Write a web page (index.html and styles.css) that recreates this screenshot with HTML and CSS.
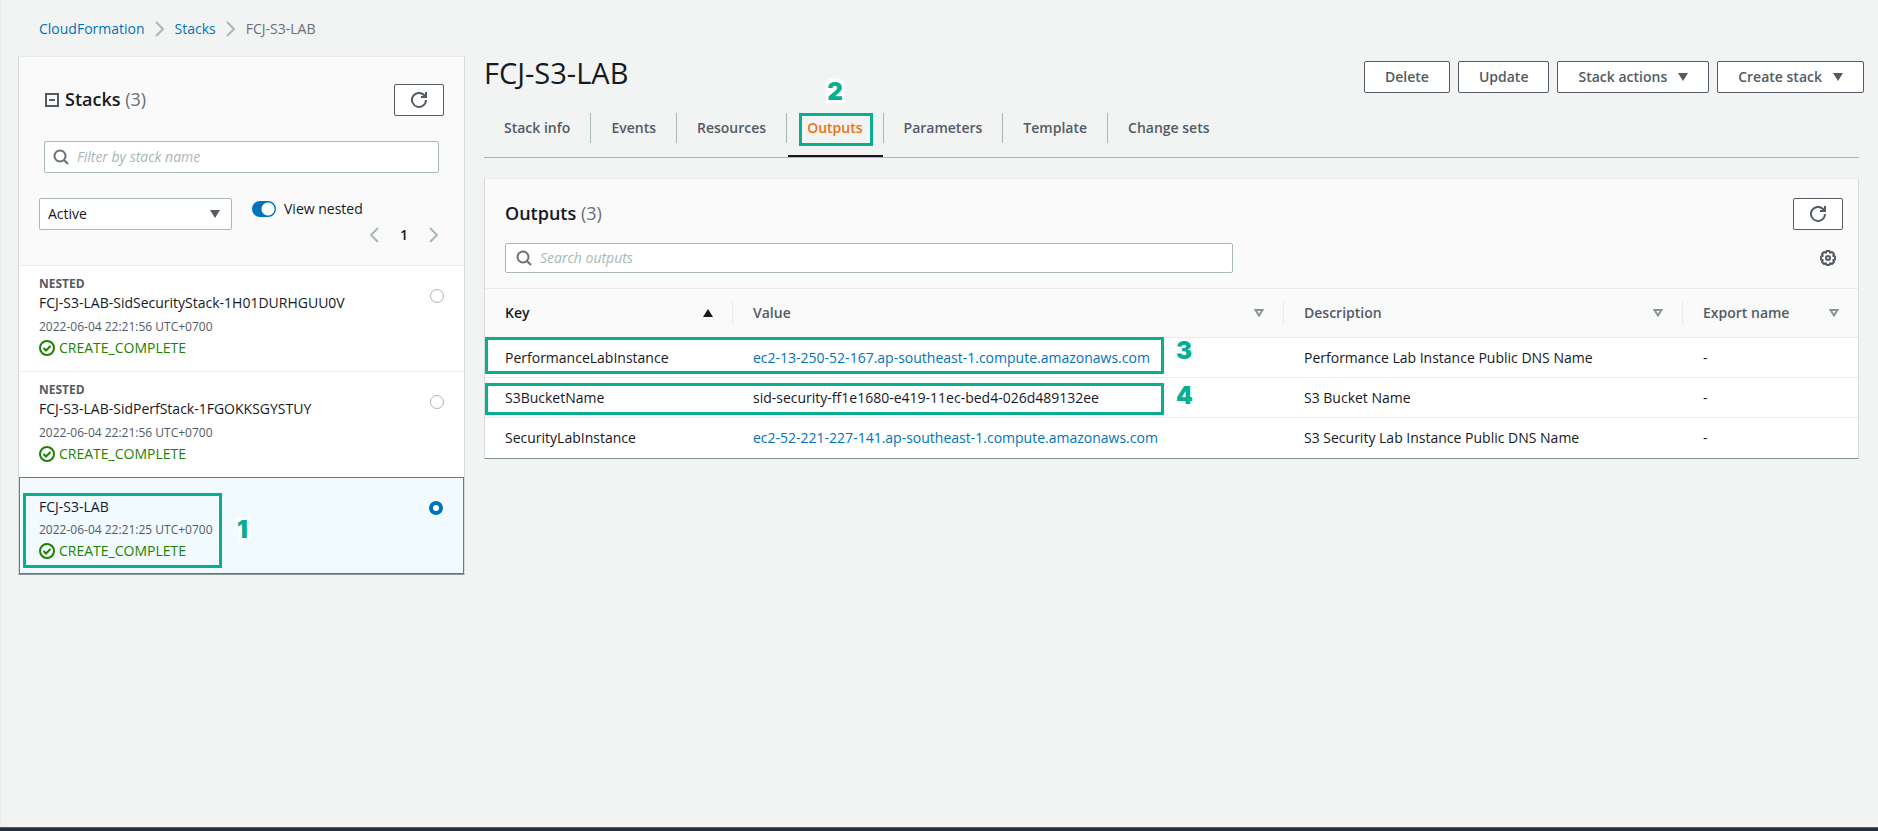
FILE: index.html
```html
<!DOCTYPE html>
<html lang="en">
<head>
    <meta charset="UTF-8">
    <title>CloudFormation - Stack FCJ-S3-LAB</title>
    <link rel="stylesheet" href="styles.css">
</head>
<body>
    <!-- Shared icons -->
    <svg class="icon-defs" aria-hidden="true">
        <symbol id="icon-chevron" viewBox="0 0 16 16">
            <path d="M4 1l7 7-7 7" fill="none" stroke="currentColor" stroke-width="2"/>
        </symbol>
        <symbol id="icon-refresh" viewBox="0 0 16 16">
            <path d="M15 8a7 7 0 1 1-2-5l2 2" fill="none" stroke="currentColor" stroke-width="2"/>
            <path d="M15 0v5h-5" fill="none" stroke="currentColor" stroke-width="2"/>
        </symbol>
        <symbol id="icon-search" viewBox="0 0 16 16">
            <circle cx="7" cy="7" r="5.5" fill="none" stroke="currentColor" stroke-width="2"/>
            <path d="M11 11l4 4" fill="none" stroke="currentColor" stroke-width="2"/>
        </symbol>
        <symbol id="icon-check" viewBox="0 0 16 16">
            <circle cx="8" cy="8" r="7" fill="none" stroke="currentColor" stroke-width="2"/>
            <path d="M4.5 8l2.5 2.5 4.5-4.5" fill="none" stroke="currentColor" stroke-width="2"/>
        </symbol>
        <symbol id="icon-caret" viewBox="0 0 10 8">
            <path d="M0 0h10L5 8z" fill="currentColor"/>
        </symbol>
        <symbol id="icon-caret-up" viewBox="0 0 10 8">
            <path d="M0 8h10L5 0z" fill="currentColor"/>
        </symbol>
        <symbol id="icon-sort" viewBox="0 0 10 8">
            <path d="M1.5 1h7L5 6.5z" fill="none" stroke="currentColor" stroke-width="2"/>
        </symbol>
        <symbol id="icon-collapse" viewBox="0 0 14 14">
            <path d="M1 1h12v12H1zM4 7h6" fill="none" stroke="currentColor" stroke-width="2"/>
        </symbol>
        <symbol id="icon-gear" viewBox="0 0 16 16">
            <path d="M6.5 1h3l.6 1.8 1.9-.8 2 2-.8 1.900 1.800.6v3l-1.800.6.8 1.900-2 2-1.900-.8-.6 1.800h-3l-.6-1.800-1.900.8-2-2 .8-1.900L1 9.500v-3l1.800-.6L2 4l2-2 1.900.8z" fill="none" stroke="currentColor" stroke-width="2" stroke-linejoin="round"/>
            <circle cx="8" cy="8" r="2" fill="none" stroke="currentColor" stroke-width="2"/>
        </symbol>
    </svg>

    <nav class="breadcrumb" aria-label="Breadcrumb">
        <a href="#">CloudFormation</a>
        <svg class="icon"><use href="#icon-chevron"/></svg>
        <a href="#">Stacks</a>
        <svg class="icon"><use href="#icon-chevron"/></svg>
        <span>FCJ-S3-LAB</span>
    </nav>

    <div class="layout">
        <aside class="panel sidebar">
            <div class="sidebar-header">
                <div class="sidebar-title">
                    <svg class="icon-collapse"><use href="#icon-collapse"/></svg>
                    <h2>Stacks <span class="count">(3)</span></h2>
                    <button class="button icon-button" aria-label="Refresh stacks"><svg class="icon"><use href="#icon-refresh"/></svg></button>
                </div>
                <label class="search">
                    <svg class="icon"><use href="#icon-search"/></svg>
                    <input type="text" placeholder="Filter by stack name" aria-label="Filter by stack name">
                </label>
                <div class="filters">
                    <div class="select">
                        <select aria-label="Stack status">
                            <option>Active</option>
                            <option>Deleted</option>
                        </select>
                        <svg class="icon-caret"><use href="#icon-caret"/></svg>
                    </div>
                    <label class="toggle">
                        <input type="checkbox" checked>
                        View nested
                    </label>
                </div>
                <div class="pagination">
                    <button aria-label="Previous page"><svg class="icon flip"><use href="#icon-chevron"/></svg></button>
                    <span>1</span>
                    <button aria-label="Next page"><svg class="icon"><use href="#icon-chevron"/></svg></button>
                </div>
            </div>

            <label class="stack">
                <span class="stack-info">
                    <span class="nested">NESTED</span>
                    <span class="stack-name">FCJ-S3-LAB-SidSecurityStack-1H01DURHGUU0V</span>
                    <span class="date">2022-06-04 22:21:56 UTC+0700</span>
                    <span class="status"><svg class="icon"><use href="#icon-check"/></svg>CREATE_COMPLETE</span>
                </span>
                <input type="radio" name="stack">
            </label>
            <label class="stack">
                <span class="stack-info">
                    <span class="nested">NESTED</span>
                    <span class="stack-name">FCJ-S3-LAB-SidPerfStack-1FGOKKSGYSTUY</span>
                    <span class="date">2022-06-04 22:21:56 UTC+0700</span>
                    <span class="status"><svg class="icon"><use href="#icon-check"/></svg>CREATE_COMPLETE</span>
                </span>
                <input type="radio" name="stack">
            </label>
            <label class="stack selected">
                <span class="stack-info">
                    <span class="stack-name">FCJ-S3-LAB</span>
                    <span class="date">2022-06-04 22:21:25 UTC+0700</span>
                    <span class="status"><svg class="icon"><use href="#icon-check"/></svg>CREATE_COMPLETE</span>
                </span>
                <input type="radio" name="stack" checked>
                <span class="mark mark-stack"></span>
                <span class="step step-stack">1</span>
            </label>
        </aside>

        <main class="content">
            <header class="content-header">
                <h1>FCJ-S3-LAB</h1>
                <div class="actions">
                    <button class="button">Delete</button>
                    <button class="button">Update</button>
                    <button class="button">Stack actions <svg class="icon-caret"><use href="#icon-caret"/></svg></button>
                    <button class="button">Create stack <svg class="icon-caret"><use href="#icon-caret"/></svg></button>
                </div>
            </header>

            <nav class="tabs">
                <a href="#">Stack info</a>
                <a href="#">Events</a>
                <a href="#">Resources</a>
                <a href="#" class="active">Outputs<span class="mark mark-tab"></span><span class="step step-tab">2</span></a>
                <a href="#">Parameters</a>
                <a href="#">Template</a>
                <a href="#">Change sets</a>
            </nav>

            <section class="panel outputs">
                <div class="outputs-header">
                    <div class="outputs-row">
                        <h2>Outputs <span class="count">(3)</span></h2>
                        <button class="button icon-button" aria-label="Refresh outputs"><svg class="icon"><use href="#icon-refresh"/></svg></button>
                    </div>
                    <div class="outputs-row">
                        <label class="search">
                            <svg class="icon"><use href="#icon-search"/></svg>
                            <input type="text" placeholder="Search outputs" aria-label="Search outputs">
                        </label>
                        <button class="settings" aria-label="Preferences"><svg class="icon"><use href="#icon-gear"/></svg></button>
                    </div>
                </div>

                <div class="table-wrap">
                    <table>
                        <thead>
                            <tr>
                                <th class="col-key sorted"><div>Key <svg class="icon-caret"><use href="#icon-caret-up"/></svg></div></th>
                                <th class="col-value"><div>Value <svg class="icon-caret"><use href="#icon-sort"/></svg></div></th>
                                <th class="col-description"><div>Description <svg class="icon-caret"><use href="#icon-sort"/></svg></div></th>
                                <th><div>Export name <svg class="icon-caret"><use href="#icon-sort"/></svg></div></th>
                            </tr>
                        </thead>
                        <tbody>
                            <tr>
                                <td>PerformanceLabInstance</td>
                                <td><a href="#">ec2-13-250-52-167.ap-southeast-1.compute.amazonaws.com</a></td>
                                <td>Performance Lab Instance Public DNS Name</td>
                                <td>-</td>
                            </tr>
                            <tr>
                                <td>S3BucketName</td>
                                <td>sid-security-ff1e1680-e419-11ec-bed4-026d489132ee</td>
                                <td>S3 Bucket Name</td>
                                <td>-</td>
                            </tr>
                            <tr>
                                <td>SecurityLabInstance</td>
                                <td><a href="#">ec2-52-221-227-141.ap-southeast-1.compute.amazonaws.com</a></td>
                                <td>S3 Security Lab Instance Public DNS Name</td>
                                <td>-</td>
                            </tr>
                        </tbody>
                    </table>
                    <span class="mark mark-row-1"></span>
                    <span class="step step-row-1">3</span>
                    <span class="mark mark-row-2"></span>
                    <span class="step step-row-2">4</span>
                </div>
            </section>
        </main>
    </div>

    <footer class="footer"></footer>
</body>
</html>
```
FILE: styles.css
```css
* {
    box-sizing: border-box;
}
body {
    display: flex;
    flex-direction: column;
    min-height: 100vh;
    margin: 0;
    background-color: #f2f3f3;
    box-shadow: inset 1px 0 #eaeded;
    color: #16191f;
    font-family: "Open Sans", "Noto Sans", sans-serif;
    font-size: 14px;
    line-height: 20px;
}
a {
    color: #0073bb;
    text-decoration: none;
}
h1, h2 {
    margin: 0;
}
h1 {
    font-size: 29px;
    font-weight: 400;
    line-height: 34px;
}
h2 {
    padding-bottom: 2px;
    font-size: 18px;
    font-weight: 600;
    line-height: 24px;
}
button, input, select {
    font: inherit;
    color: inherit;
}
button {
    padding: 0;
    border: none;
    background: none;
    cursor: pointer;
}
.icon-defs {
    position: absolute;
    width: 0;
    height: 0;
}
.icon {
    flex: none;
    width: 16px;
    height: 16px;
}
.flip {
    transform: scaleX(-1);
}
.icon-caret {
    flex: none;
    width: 10px;
    height: 8px;
}
.icon-collapse {
    width: 14px;
    height: 14px;
    color: #545b64;
}
.count {
    color: #687078;
    font-weight: 400;
}

/* Breadcrumb */
.breadcrumb {
    display: flex;
    align-items: center;
    gap: 7px;
    padding: 19px 39px 17px;
    color: #687078;
}
.breadcrumb .icon {
    color: #aab7b8;
}

/* Layout */
.layout {
    display: grid;
    grid-template-columns: 447px minmax(0, 1fr);
    gap: 19px;
    align-items: start;
    flex: 1;
    padding: 0 14px 40px 18px;
}
.panel {
    background-color: #fff;
    border: 1px solid #d5dbdb;
    border-top-color: #eaeded;
    border-bottom-color: #879596;
}

/* Buttons and fields */
.button {
    display: flex;
    align-items: center;
    gap: 11px;
    height: 32px;
    padding: 0 20px;
    border: 1px solid #545b64;
    border-radius: 2px;
    background-color: #fff;
    color: #545b64;
    font-weight: 600;
}
.icon-button {
    padding: 0 16px;
}
.search {
    display: flex;
    align-items: center;
    gap: 8px;
    height: 32px;
    padding: 0 8px;
    border: 1px solid #aab7b8;
    border-radius: 2px;
    background-color: #fff;
    color: #687078;
}
.search input {
    flex: 1;
    min-width: 0;
    padding: 0;
    border: none;
    outline: none;
    background: none;
}
.search input::placeholder {
    color: #aab7b8;
    font-style: italic;
}

/* Stack list */
.sidebar-header {
    padding: 27px 20px 22px;
    background-color: #fafafa;
}
.sidebar-title {
    display: flex;
    align-items: center;
    gap: 6px;
    padding-left: 6px;
}
.sidebar-title .button {
    margin-left: auto;
}
.sidebar .search {
    margin: 25px 5px;
}
.filters {
    display: flex;
    gap: 20px;
}
.select {
    display: flex;
    align-items: center;
    position: relative;
    width: 193px;
}
.select select {
    width: 100%;
    height: 32px;
    padding: 0 8px;
    border: 1px solid #aab7b8;
    border-radius: 2px;
    background-color: #fff;
    appearance: none;
}
.select .icon-caret {
    position: absolute;
    right: 12px;
    color: #545b64;
    pointer-events: none;
}
.toggle {
    display: flex;
    align-items: center;
    align-self: flex-start;
    gap: 8px;
    line-height: 22px;
}
.toggle input {
    width: 24px;
    height: 16px;
    margin: 0;
    border-radius: 8px;
    background: #0073bb radial-gradient(circle at 16px 8px, #fff 6px, transparent 7px);
    appearance: none;
}
.pagination {
    display: flex;
    justify-content: flex-end;
    align-items: center;
    gap: 18px;
    height: 16px;
    margin-top: -3px;
    padding-right: 2px;
    font-weight: 600;
}
.pagination button {
    display: flex;
    color: #aab7b8;
}
.stack {
    display: flex;
    justify-content: space-between;
    position: relative;
    padding: 8px 20px 13px;
    border-top: 1px solid #eaeded;
}
.stack-info {
    display: flex;
    flex-direction: column;
}
.nested, .date {
    color: #545b64;
    font-size: 12px;
}
.nested {
    font-weight: 700;
    line-height: 19px;
}
.date {
    margin-top: 4px;
}
.status {
    display: flex;
    align-items: center;
    gap: 4px;
    margin-top: 1px;
    color: #1d8102;
}
.stack input {
    width: 14px;
    height: 14px;
    margin: 15px 0 0;
    border: 1px solid #aab7b8;
    border-radius: 50%;
    background-color: #fff;
    appearance: none;
}
.stack input:checked {
    margin-top: 4px;
    border: 4px solid #0073bb;
}
.stack.selected {
    padding: 19px 20px 12px 19px;
    border: 1px solid #00a1c9;
    background-color: #f1faff;
}
.selected .date {
    margin-top: 3px;
}

/* Stack details */
.content-header {
    display: flex;
    justify-content: space-between;
    align-items: flex-start;
    min-height: 36px;
}
.actions {
    display: flex;
    gap: 8px;
    padding-top: 5px;
}
.tabs {
    display: flex;
    margin: 20px 5px 20px 0;
    border-bottom: 1px solid #aab7b8;
    line-height: 30px;
}
.tabs a {
    position: relative;
    margin-bottom: 14px;
    padding: 0 20px;
    border-right: 1px solid #aab7b8;
    color: #545b64;
    font-weight: 600;
}
.tabs a:last-child {
    border-right: none;
}
.tabs .active {
    color: #ec7211;
}
.tabs .active::after {
    content: "";
    position: absolute;
    left: 1px;
    right: 0;
    bottom: -14px;
    height: 2px;
    background-color: #16191f;
}

/* Outputs table */
.outputs {
    margin-right: 5px;
}
.outputs-header {
    display: flex;
    flex-direction: column;
    gap: 13px;
    padding: 19px 15px 15px 20px;
    background-color: #fafafa;
}
.outputs-row {
    display: flex;
    justify-content: space-between;
    align-items: center;
}
.outputs .search {
    width: 100%;
    max-width: 728px;
    height: 30px;
    padding: 0 10px;
}
.settings {
    display: flex;
    margin-right: 7px;
    color: #545b64;
}
.table-wrap {
    position: relative;
}
table {
    width: 100%;
    border-collapse: collapse;
    table-layout: fixed;
}
th, td {
    border-top: 1px solid #eaeded;
    text-align: left;
}
th {
    padding: 12px 0;
    background-color: #fafafa;
    color: #545b64;
    font-weight: 600;
}
th div {
    display: flex;
    justify-content: space-between;
    align-items: center;
    height: 24px;
    padding: 0 19px 0 20px;
    border-right: 1px solid #eaeded;
}
th:last-child div {
    border-right: none;
}
th .icon-caret {
    color: #879596;
}
.sorted, .sorted .icon-caret {
    color: #16191f;
}
td {
    height: 40px;
    padding: 0 20px;
    white-space: nowrap;
}
.col-key {
    width: 248px;
}
.col-value {
    width: 551px;
}
.col-description {
    width: 399px;
}

/* Numbered steps over the page */
.mark {
    position: absolute;
    border: 3px solid #07ae8f;
    pointer-events: none;
}
.step {
    position: absolute;
    color: #07ae8f;
    font-family: Inter, sans-serif;
    font-size: 24px;
    font-weight: 900;
    line-height: 24px;
    text-shadow: 2px 0 #fff, -2px 0 #fff, 0 2px #fff, 0 -2px #fff, 3px 3px 1px #fff, -3px 3px 1px #fff, 3px -3px 1px #fff, -3px -3px 1px #fff;
}
.mark-stack {
    top: 15px;
    left: 3px;
    width: 199px;
    height: 75px;
}
.step-stack {
    top: 40px;
    left: 217px;
}
.mark-tab {
    top: 0;
    bottom: -3px;
    left: 12px;
    right: 10px;
}
.step-tab {
    top: -33px;
    left: 40px;
}
.mark-row-1, .mark-row-2 {
    left: 0;
    width: 679px;
}
.mark-row-1 {
    top: 49px;
    height: 37px;
}
.mark-row-2 {
    top: 95px;
    height: 32px;
}
.step-row-1, .step-row-2 {
    left: 691px;
}
.step-row-1 {
    top: 51px;
}
.step-row-2 {
    top: 96px;
}

.footer {
    height: 4px;
    border-top: 1px solid #545b64;
    background-color: #232f3e;
}
```
